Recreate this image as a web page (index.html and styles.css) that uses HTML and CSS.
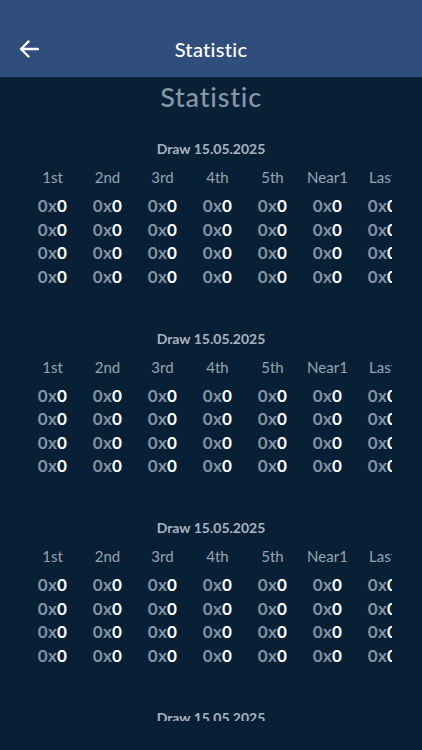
FILE: index.html
```html
<!DOCTYPE html>
<html>
<head>
<meta charset="utf-8">
<link rel="stylesheet" href="styles.css">
</head>
<body>
<header class="appbar">
  <svg class="back" width="20" height="18" viewBox="0 0 20 18"><path d="M19 9H2M9.5 1.5L2 9l7.5 7.5" fill="none" stroke="#fff" stroke-width="2.4" stroke-linecap="round" stroke-linejoin="round"/></svg>
  <div class="appbar-title">Statistic</div>
</header>
<main class="content">
  <h1 class="page-title">Statistic</h1>
  <div id="sections"></div>
</main>
<script src="app.js"></script>
</body>
</html>
```
FILE: styles.css
```css
html, body { margin: 0; padding: 0; }
body {
  width: 422px; height: 750px; overflow: hidden;
  background: #072036;
  font-family: "Lato", "Noto Sans", sans-serif;
}
.appbar {
  height: 77px; box-sizing: border-box; padding-top: 20px; background: #304e7b;
  display: flex; align-items: center; justify-content: center;
  position: relative;
}
.back { position: absolute; left: 19px; top: 40px; }
.appbar-title { color: #fff; font-size: 20px; font-weight: 500; letter-spacing: 0.3px; }
.content { height: 644px; overflow: hidden; }
.page-title {
  margin: 0; padding-top: 4px; text-align: center;
  color: #8896a6; font-size: 27px; font-weight: 500; line-height: 32px; letter-spacing: 0.8px;
}
.section { margin-top: 27px; margin-bottom: 41.5px; }
.draw { text-align: center; color: #a8b3bf; font-weight: 700; font-size: 14px; line-height: 18px; }
.grid-wrap { margin: 0 30px 0 25px; overflow: hidden; }
.grid { display: flex; }
.col { flex: 0 0 55px; text-align: center; }
.head { color: #97a3b0; font-size: 15px; line-height: 20px; margin-top: 9px; margin-bottom: 7px; }
.cell { font-size: 17px; line-height: 23.5px; white-space: nowrap; letter-spacing: 0.3px; }
.g { color: #8493a3; font-weight: 700; }
.w { color: #fff; font-weight: 700; }
```
FILE: app.js
```js
const heads = ["1st","2nd","3rd","4th","5th","Near1","Last"];
const root = document.getElementById("sections");
let html = "";
for (let s = 0; s < 4; s++) {
  html += '<section class="section"><div class="draw">Draw 15.05.2025</div><div class="grid-wrap"><div class="grid">';
  for (const h of heads) {
    html += '<div class="col"><div class="head">' + h + '</div>';
    for (let r = 0; r < 4; r++) html += '<div class="cell"><span class="g">0x</span><span class="w">0</span></div>';
    html += '</div>';
  }
  html += '</div></div></section>';
}
root.innerHTML = html;
```
